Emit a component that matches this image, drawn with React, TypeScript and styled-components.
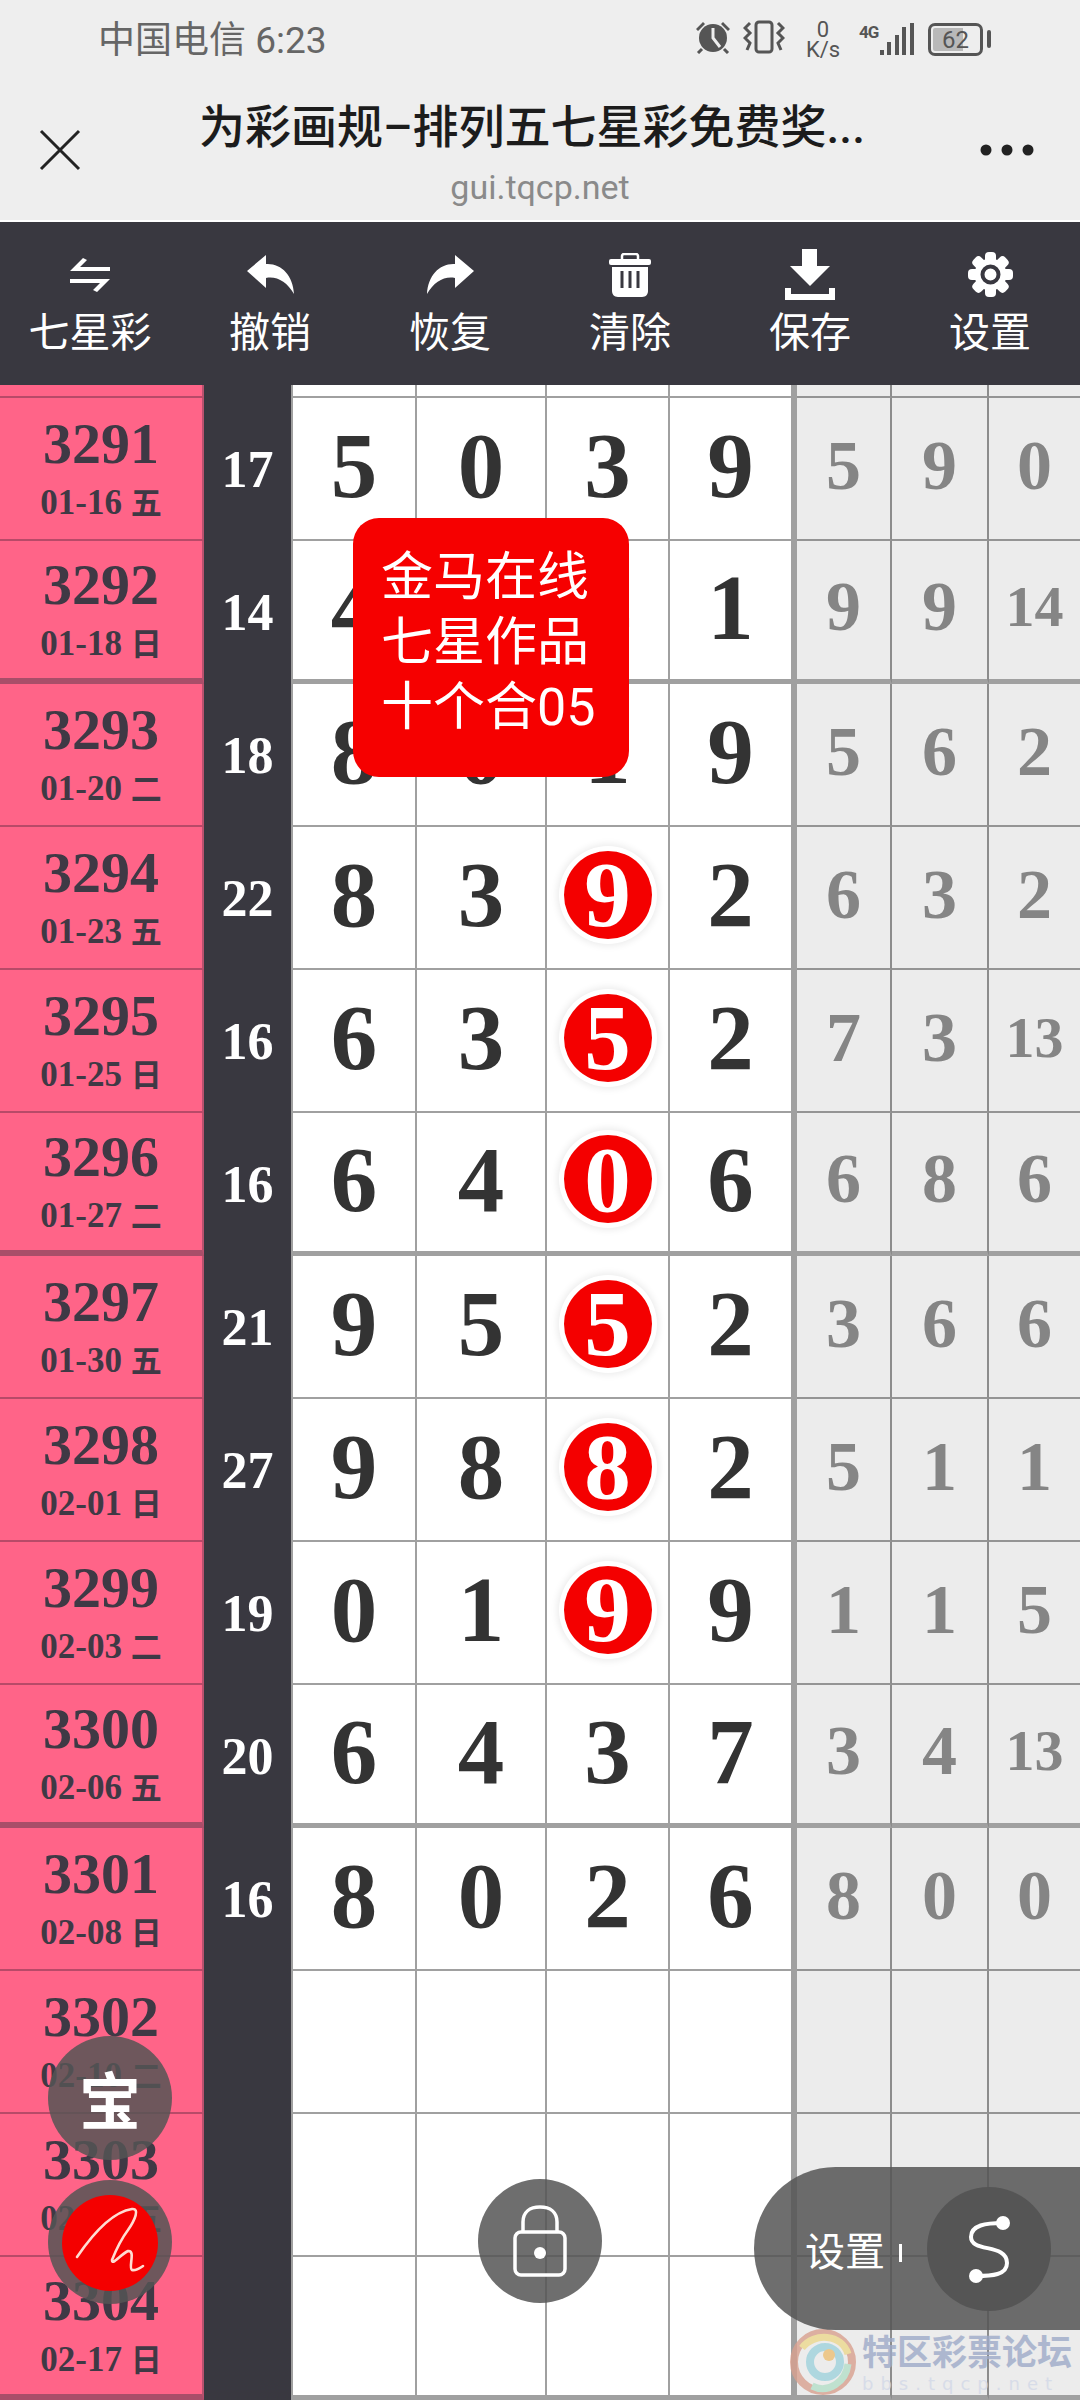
import React from 'react'
import styled, { createGlobalStyle } from 'styled-components'

const SERIF = '"Liberation Serif", "Noto Sans CJK SC", serif'
const SANS = 'Roboto, "Noto Sans CJK SC", sans-serif'
const LINE = '#a0a0a0'

const GlobalStyle = createGlobalStyle`
  html, body {
    margin: 0;
    padding: 0;
    background: #fff;
  }
  * {
    box-sizing: border-box;
  }
`

const Page = styled.div`
  position: relative;
  width: 1080px;
  height: 2400px;
  overflow: hidden;
  font-family: ${SANS};
`

const Header = styled.header`
  height: 222px;
  background: #eeeeee;
  border-bottom: 2px solid #fff;
`

const StatusBar = styled.div`
  height: 74px;
  padding: 20px 97px 0 98px;
  display: flex;
  justify-content: space-between;
  align-items: flex-start;
  color: #666;
`

const Carrier = styled.div`
  font-size: 37px;
  line-height: 42px;
  white-space: nowrap;
`

const StatusIcons = styled.div`
  display: flex;
  align-items: flex-start;
  margin-top: 0;
`

const Speed = styled.div`
  width: 38px;
  margin: 0 17px 0 19px;
  text-align: center;
  font-size: 22px;
  line-height: 20px;
  color: #555;
`

const Network = styled.div`
  display: flex;
  margin-right: 13px;
  padding-top: 3px;
  align-items: flex-start;
`

const NetworkLabel = styled.div`
  width: 20px;
  font-size: 17px;
  line-height: 18px;
  font-weight: 700;
  color: #555;
  letter-spacing: -1px;
`

const Battery = styled.div`
  position: relative;
  width: 55px;
  height: 33px;
  margin-top: 3px;
  border: 3px solid #555;
  border-radius: 7px;
  background: linear-gradient(90deg, #b9b9b9 0 66%, transparent 66%);
  background-clip: content-box;
  padding: 2px;
  font-size: 24px;
  line-height: 24px;
  text-align: center;
  color: #555;
  &::after {
    content: '';
    position: absolute;
    top: 4px;
    right: -11px;
    width: 4px;
    height: 18px;
    border-radius: 2px;
    background: #555;
  }
`

const NavRow = styled.div`
  height: 146px;
  display: grid;
  grid-template-columns: 130px 1fr 130px;
  align-items: center;
`

const NavButton = styled.div<{ $right?: boolean }>`
  display: flex;
  justify-content: ${p => (p.$right ? 'flex-start' : 'flex-start')};
  padding-left: ${p => (p.$right ? '30px' : '39px')};
  padding-top: 6px;
`

const TitleBlock = styled.div`
  align-self: start;
  padding-top: 23px;
  text-align: center;
`

const PageTitle = styled.div`
  font-size: 46px;
  line-height: 60px;
  color: #1c1c1c;
  white-space: nowrap;
  font-weight: 500;
  margin-left: -16px;
`

const PageUrl = styled.div`
  margin-top: 8px;
  font-size: 34px;
  line-height: 44px;
  color: #8a8a8a;
`

const Toolbar = styled.nav`
  height: 163px;
  background: #393840;
  display: grid;
  grid-template-columns: repeat(6, 180px);
`

const ToolButton = styled.div`
  height: 100%;
  display: flex;
  flex-direction: column;
  align-items: center;
  color: #fff;
`

const ToolIcon = styled.div`
  height: 88px;
  display: flex;
  align-items: center;
  justify-content: center;
  padding-top: 17px;
`

const ToolLabel = styled.div`
  font-size: 41px;
  line-height: 46px;
  white-space: nowrap;
`

const Row = styled.div<{ $short?: boolean }>`
  height: ${p => (p.$short ? '13px' : '143px')};
  display: grid;
  grid-template-columns: 204px 87px 126px 130px 123px 127px 95px 97px 91px;
`

const IssueCell = styled.div<{ $thick?: boolean }>`
  display: flex;
  flex-direction: column;
  align-items: center;
  justify-content: center;
  gap: 10px;
  background: #ff6488;
  border-right: 2px solid #b9516e;
  border-bottom: ${p => (p.$thick ? '6px solid #a94e69' : '2px solid #b84a68')};
  color: #3f3945;
  font-family: ${SERIF};
  font-weight: 700;
`

const IssueNo = styled.div`
  font-size: 58px;
  line-height: 56px;
`

const IssueDate = styled.div`
  font-size: 35px;
  line-height: 38px;
  white-space: nowrap;
`

const Weekday = styled.span`
  font-family: "Noto Sans CJK SC", sans-serif;
  font-size: 31px;
  font-weight: 700;
`

const SumCell = styled.div`
  display: flex;
  align-items: center;
  justify-content: center;
  background: #393840;
  color: #fff;
  font-family: ${SERIF};
  font-weight: 700;
  font-size: 52px;
`

const NumCell = styled.div<{ $thick?: boolean; $first?: boolean; $divider?: boolean; $last?: boolean }>`
  display: flex;
  align-items: center;
  justify-content: center;
  padding-bottom: 6px;
  background: #fff;
  color: #333;
  font-family: ${SERIF};
  font-weight: 700;
  font-size: 93px;
  line-height: 1;
  border-bottom: ${p => (p.$thick ? `5px solid ${LINE}` : `2px solid ${LINE}`)};
  border-left: ${p => (p.$first ? `2px solid ${LINE}` : 'none')};
  border-right: ${p => (p.$divider ? `6px solid ${LINE}` : `2px solid ${LINE}`)};
`

const MissCell = styled.div<{ $thick?: boolean; $last?: boolean; $small?: boolean }>`
  display: flex;
  align-items: center;
  justify-content: center;
  padding-bottom: 6px;
  background: #ececec;
  color: #858585;
  font-family: ${SERIF};
  font-weight: 700;
  font-size: ${p => (p.$small ? '58px' : '70px')};
  line-height: 1;
  border-bottom: ${p => (p.$thick ? `5px solid ${LINE}` : '2px solid #949494')};
  border-right: ${p => (p.$last ? 'none' : '2px solid #8c8c8c')};
`

const Ball = styled.div`
  width: 88px;
  height: 88px;
  border-radius: 50%;
  background: #f40000;
  color: #fff;
  display: flex;
  align-items: center;
  justify-content: center;
  box-shadow: 0 0 0 5px #fff, 0 0 7px 7px rgba(0, 0, 0, 0.08);
`

const Popup = styled.div`
  position: absolute;
  left: 353px;
  top: 518px;
  width: 276px;
  height: 259px;
  padding: 27px 0 0 28px;
  border-radius: 26px;
  background: #f60000;
  color: #fff;
  font-size: 52px;
  line-height: 65px;
  white-space: nowrap;
`

const Floating = styled.div<{ $left: number; $top: number }>`
  position: absolute;
  left: ${p => p.$left}px;
  top: ${p => p.$top}px;
  width: 124px;
  height: 124px;
  border-radius: 50%;
  background: rgba(85, 85, 85, 0.85);
  color: #fff;
  display: flex;
  align-items: center;
  justify-content: center;
  font-size: 62px;
  font-weight: 700;
`

const SettingsPill = styled.div`
  position: absolute;
  left: 754px;
  top: 2167px;
  width: 326px;
  height: 163px;
  border-radius: 82px 0 0 82px;
  background: rgba(85, 85, 85, 0.85);
  display: flex;
  align-items: center;
  padding-left: 51px;
  color: #fff;
`

const PillText = styled.div`
  font-size: 40px;
  line-height: 46px;
  margin-top: 8px;
  white-space: nowrap;
`

const PillBar = styled.div`
  width: 3px;
  height: 18px;
  margin: 8px 0 0 14px;
  background: #fff;
`

const PillCircle = styled.div`
  width: 124px;
  height: 124px;
  margin-left: 25px;
  border-radius: 50%;
  background: #555;
  display: flex;
  align-items: center;
  justify-content: center;
`

const Watermark = styled.div`
  position: absolute;
  left: 790px;
  top: 2328px;
  display: flex;
  opacity: 0.8;
`

const WatermarkText = styled.div`
  margin: 6px 0 0 5px;
  color: #9eabc9;
  font-weight: 700;
  font-size: 35px;
  line-height: 40px;
  white-space: nowrap;
`

const WatermarkSub = styled.div`
  font-family: "DejaVu Sans", sans-serif;
  font-weight: 400;
  font-size: 18px;
  line-height: 20px;
  letter-spacing: 7px;
  color: #d3d9e8;
`

type Draw = { no: string; date: string; day: string; sum?: string; nums?: string[]; hit?: boolean; miss?: string[] }

const draws: Draw[] = [
  { no: '3291', date: '01-16', day: '五', sum: '17', nums: ['5', '0', '3', '9'], miss: ['5', '9', '0'] },
  { no: '3292', date: '01-18', day: '日', sum: '14', nums: ['4', '5', '4', '1'], miss: ['9', '9', '14'] },
  { no: '3293', date: '01-20', day: '二', sum: '18', nums: ['8', '0', '1', '9'], miss: ['5', '6', '2'] },
  { no: '3294', date: '01-23', day: '五', sum: '22', nums: ['8', '3', '9', '2'], hit: true, miss: ['6', '3', '2'] },
  { no: '3295', date: '01-25', day: '日', sum: '16', nums: ['6', '3', '5', '2'], hit: true, miss: ['7', '3', '13'] },
  { no: '3296', date: '01-27', day: '二', sum: '16', nums: ['6', '4', '0', '6'], hit: true, miss: ['6', '8', '6'] },
  { no: '3297', date: '01-30', day: '五', sum: '21', nums: ['9', '5', '5', '2'], hit: true, miss: ['3', '6', '6'] },
  { no: '3298', date: '02-01', day: '日', sum: '27', nums: ['9', '8', '8', '2'], hit: true, miss: ['5', '1', '1'] },
  { no: '3299', date: '02-03', day: '二', sum: '19', nums: ['0', '1', '9', '9'], hit: true, miss: ['1', '1', '5'] },
  { no: '3300', date: '02-06', day: '五', sum: '20', nums: ['6', '4', '3', '7'], miss: ['3', '4', '13'] },
  { no: '3301', date: '02-08', day: '日', sum: '16', nums: ['8', '0', '2', '6'], miss: ['8', '0', '0'] },
  { no: '3302', date: '02-10', day: '二' },
  { no: '3303', date: '02-13', day: '五' },
  { no: '3304', date: '02-17', day: '日' },
]

const AlarmIcon = () => (
  <svg width="36" height="34" viewBox="0 0 36 34">
    <circle cx="18" cy="18" r="14" fill="#555" />
    <path d="M1 9 L8 2 L10 4 L3 11 Z M35 9 L28 2 L26 4 L33 11 Z" fill="#555" />
    <path d="M7 29 L3 33 M29 29 L33 33" stroke="#555" strokeWidth="3" />
    <path d="M18 8 V18 L25 27" stroke="#eee" strokeWidth="3" fill="none" />
  </svg>
)

const VibrateIcon = () => (
  <svg width="42" height="34" viewBox="0 0 42 34" fill="none" stroke="#555">
    <rect x="13" y="2" width="16" height="30" rx="3" strokeWidth="3" />
    <path d="M7 3 L2 8 L7 13 L2 18 L7 23 L4 30 M35 3 L40 8 L35 13 L40 18 L35 23 L38 30" strokeWidth="3" />
  </svg>
)

const SignalBars = () => (
  <svg width="36" height="34" viewBox="0 0 36 34" fill="#555">
    <rect x="1" y="27" width="4" height="5" />
    <rect x="8" y="19" width="4" height="13" />
    <rect x="16" y="12" width="4" height="20" />
    <rect x="23" y="4" width="4" height="28" />
    <rect x="31" y="0" width="4" height="32" />
  </svg>
)

const CloseIcon = () => (
  <svg width="42" height="42" viewBox="0 0 42 42">
    <path d="M2 2 L40 40 M40 2 L2 40" stroke="#222" strokeWidth="3" />
  </svg>
)

const DotsIcon = () => (
  <svg width="54" height="12" viewBox="0 0 54 12" fill="#222">
    <circle cx="6" cy="6" r="5.5" />
    <circle cx="27" cy="6" r="5.5" />
    <circle cx="48" cy="6" r="5.5" />
  </svg>
)

const SwapIcon = () => (
  <svg width="40" height="34" viewBox="0 0 40 34" fill="#fff">
    <path d="M13 0 L17 2 L10 9 H40 V13 H0 Z" />
    <path d="M0 21 H40 L27 34 L23 32 L30 25 H0 Z" />
  </svg>
)

const UndoIcon = ({ flip }: { flip?: boolean }) => (
  <svg width="47" height="39" viewBox="0 0 47 39" fill="#fff" style={flip ? { transform: 'scaleX(-1)' } : undefined}>
    <path d="M19 0 L0 16 L19 33 V23 C30 21 40 27 47 39 C46 20 34 8 19 9 Z" />
  </svg>
)

const TrashIcon = () => (
  <svg width="42" height="44" viewBox="0 0 42 44">
    <path d="M13 7 V3 C13 2 14 1 15 1 H27 C28 1 29 2 29 3 V7" stroke="#fff" strokeWidth="2.5" fill="none" />
    <rect x="0" y="6" width="42" height="6" rx="2" fill="#fff" />
    <path d="M3 14 H39 V38 C39 41 37 44 33 44 H9 C5 44 3 41 3 38 Z" fill="#fff" />
    <path d="M13 18 V35 M21 18 V35 M29 18 V35" stroke="#393840" strokeWidth="3" />
  </svg>
)

const DownloadIcon = () => (
  <svg width="50" height="51" viewBox="0 0 50 51" fill="#fff">
    <path d="M17 0 H32 V17 H45 L25 37 L5 17 H17 Z" />
    <path d="M0 39 H6 V45 H44 V39 H50 V51 H0 Z" />
  </svg>
)

const GearIcon = () => (
  <svg width="45" height="45" viewBox="0 0 45 45">
    {[0, 45, 90, 135, 180, 225, 270, 315].map(a => (
      <rect key={a} x="17" y="0" width="11" height="12" rx="4" fill="#fff" transform={`rotate(${a} 22.5 22.5)`} />
    ))}
    <circle cx="22.5" cy="22.5" r="16" fill="#fff" />
    <circle cx="22.5" cy="22.5" r="8" fill="none" stroke="#393840" strokeWidth="4" />
  </svg>
)

const SignatureIcon = () => (
  <svg width="124" height="124" viewBox="8 10 124 124">
    <circle cx="70" cy="73" r="48" fill="#f40000" />
    <path
      d="M37 87 C52 65 72 42 92 39 C100 38 95 50 88 60 C82 68 76 80 72 90 C72 96 80 85 88 81 C96 80 88 98 92 100 C96 101 100 98 103 96"
      fill="none"
      stroke="#ffdcd2"
      strokeWidth="2.6"
      strokeLinecap="round"
    />
  </svg>
)

const LockIcon = () => (
  <svg width="54" height="72" viewBox="0 0 54 72" fill="none" stroke="#fff" strokeWidth="3.5">
    <rect x="2" y="27" width="50" height="43" rx="6" />
    <path d="M10 27 V17 C10 7 17 2 27 2 C37 2 44 7 44 17 V27" />
    <circle cx="27" cy="48" r="6" fill="#fff" stroke="none" />
  </svg>
)

const PathIcon = () => (
  <svg width="46" height="68" viewBox="0 0 46 68" fill="none">
    <path d="M37 8 C20 8 5 10 5 22 C5 38 41 28 41 48 C41 60 26 61 10 61" stroke="#fff" strokeWidth="4" />
    <circle cx="37" cy="8" r="7" fill="#fff" />
    <circle cx="10" cy="61" r="7" fill="#fff" />
  </svg>
)

const SiteLogo = () => (
  <svg width="67" height="67" viewBox="0 0 67 67" fill="none">
    <circle cx="33" cy="34" r="29" stroke="#d9a08f" strokeWidth="8" />
    <path d="M12 20 C24 4 52 6 58 26" stroke="#ecd98e" strokeWidth="7" />
    <path d="M22 58 C38 66 56 54 58 36" stroke="#b5dfc8" strokeWidth="7" />
    <circle cx="35" cy="34" r="15" stroke="#9fd3dd" strokeWidth="8" />
    <circle cx="39" cy="27" r="6" fill="#ecc075" />
  </svg>
)

const tools = [
  { label: '七星彩', icon: <SwapIcon /> },
  { label: '撤销', icon: <UndoIcon /> },
  { label: '恢复', icon: <UndoIcon flip /> },
  { label: '清除', icon: <TrashIcon /> },
  { label: '保存', icon: <DownloadIcon /> },
  { label: '设置', icon: <GearIcon /> },
]

const DrawRow = ({ draw, index }: { draw: Draw; index: number }) => {
  const thick = (index + 3) % 4 === 0 && index > 0
  const nums = draw.nums || ['', '', '', '']
  const miss = draw.miss || ['', '', '']
  return (
    <Row>
      <IssueCell $thick={thick}>
        <IssueNo>{draw.no}</IssueNo>
        <IssueDate>
          {draw.date} <Weekday>{draw.day}</Weekday>
        </IssueDate>
      </IssueCell>
      <SumCell>{draw.sum}</SumCell>
      {nums.map((n, i) => (
        <NumCell key={i} $thick={thick} $first={i === 0} $divider={i === 3}>
          {draw.hit && i === 2 ? <Ball>{n}</Ball> : n}
        </NumCell>
      ))}
      {miss.map((m, i) => (
        <MissCell key={i} $thick={thick} $last={i === 2} $small={m.length > 1}>
          {m}
        </MissCell>
      ))}
    </Row>
  )
}

const App = () => {
  return (
    <Page>
      <GlobalStyle />
      <Header>
        <StatusBar>
          <Carrier>中国电信 6:23</Carrier>
          <StatusIcons>
            <AlarmIcon />
            <div style={{ width: 12 }} />
            <VibrateIcon />
            <Speed>
              0
              <br />
              K/s
            </Speed>
            <Network>
              <NetworkLabel>4G</NetworkLabel>
              <SignalBars />
            </Network>
            <Battery>62</Battery>
          </StatusIcons>
        </StatusBar>
        <NavRow>
          <NavButton>
            <CloseIcon />
          </NavButton>
          <TitleBlock>
            <PageTitle>为彩画规–排列五七星彩免费奖...</PageTitle>
            <PageUrl>gui.tqcp.net</PageUrl>
          </TitleBlock>
          <NavButton $right>
            <DotsIcon />
          </NavButton>
        </NavRow>
      </Header>
      <Toolbar>
        {tools.map(tool => (
          <ToolButton key={tool.label}>
            <ToolIcon>{tool.icon}</ToolIcon>
            <ToolLabel>{tool.label}</ToolLabel>
          </ToolButton>
        ))}
      </Toolbar>
      <Row $short>
        <IssueCell />
        <SumCell />
        <NumCell $first />
        <NumCell />
        <NumCell />
        <NumCell $divider />
        <MissCell />
        <MissCell />
        <MissCell $last />
      </Row>
      {draws.map((draw, i) => (
        <DrawRow key={draw.no} draw={draw} index={i} />
      ))}
      <Popup>
        金马在线
        <br />
        七星作品
        <br />
        十个合05
      </Popup>
      <Floating $left={48} $top={2036}>宝</Floating>
      <Floating $left={48} $top={2180}>
        <SignatureIcon />
      </Floating>
      <Floating $left={478} $top={2179}>
        <LockIcon />
      </Floating>
      <Watermark>
        <SiteLogo />
        <WatermarkText>
          特区彩票论坛
          <WatermarkSub>bbs.tqcp.net</WatermarkSub>
        </WatermarkText>
      </Watermark>
      <SettingsPill>
        <PillText>设置</PillText>
        <PillBar />
        <PillCircle>
          <PathIcon />
        </PillCircle>
      </SettingsPill>
    </Page>
  )
}

export default App
